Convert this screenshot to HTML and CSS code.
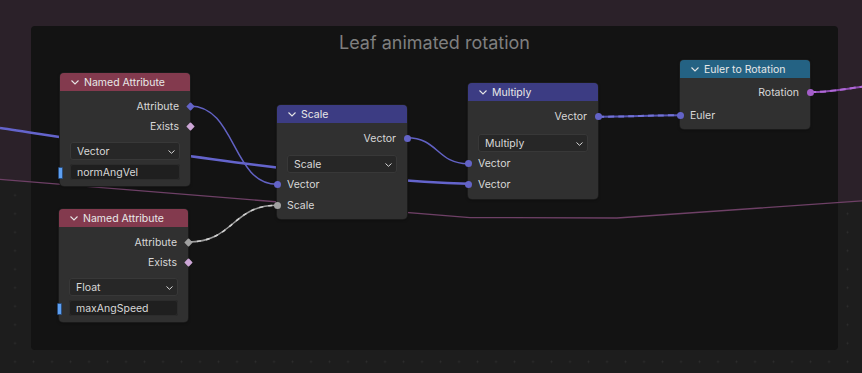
FILE: index.html
```html
<!DOCTYPE html>
<html lang="en">
<head>
  <meta charset="UTF-8">
  <meta name="viewport" content="width=device-width, initial-scale=1.0">
  <title>Leaf animated rotation</title>
  <link rel="stylesheet" href="styles.css">
</head>
<body>
  <div class="editor">
    <!-- purple area of the parent frame behind everything -->
    <svg class="backdrop" width="862" height="373" viewBox="0 0 862 373">
      <polygon points="0,0 862,0 862,201 617,218 475,218 0,179.3" fill="#2b2129"/>
    </svg>

    <div class="frame">
      <div class="frame-title">Leaf animated rotation</div>
    </div>

    <svg class="links" width="862" height="373" viewBox="0 0 862 373">
      <!-- thin link passing under everything -->
      <polyline points="-2,179.2 470,217.6 617,218 864,200.8" fill="none" stroke="#6e4066" stroke-width="1.3"/>
      <!-- long vector link into Multiply second input -->
      <path d="M0,128 C120,146 330,180 468,183.7" fill="none" stroke="#6464cc" stroke-width="2.6"/>
      <!-- attribute -> scale vector -->
      <path d="M190,106 C236,106 232,184.3 277,184.3" fill="none" stroke="#6262c4" stroke-width="1.5"/>
      <!-- float attribute -> scale -->
      <path d="M188,242 C234,242 232,205.3 277,205.3" fill="none" stroke="#9c9c9c" stroke-width="1.5"/>
      <path d="M188,242 C234,242 232,205.3 277,205.3" fill="none" stroke="#d0d0d0" stroke-width="1.5" stroke-dasharray="4 5"/>
      <!-- scale out -> multiply in -->
      <path d="M407,137.7 C438,137.7 437,163.7 468,163.7" fill="none" stroke="#6262c4" stroke-width="1.5"/>
      <!-- multiply -> euler -->
      <path d="M598,116.7 C640,116.7 640,115.3 680,115.3" fill="none" stroke="#5656b4" stroke-width="2"/>
      <path d="M598,116.7 C640,116.7 640,115.3 680,115.3" fill="none" stroke="#7272d8" stroke-width="2" stroke-dasharray="6 4"/>
      <!-- rotation out -->
      <path d="M810,92 C836,92 846,88 870,86" fill="none" stroke="#8a4cac" stroke-width="2"/>
      <path d="M810,92 C836,92 846,88 870,86" fill="none" stroke="#b068d8" stroke-width="2" stroke-dasharray="6 4"/>
    </svg>

    <!-- Named Attribute (vector) -->
    <div class="node n-attr" style="left:60px; top:73px; width:130px;">
      <div class="node-head head-attr">
        <svg class="chev" width="8" height="5" viewBox="0 0 8 5"><path d="M0.5,0.5 L4,4 L7.5,0.5" fill="none" stroke="#e6e6e6" stroke-width="1.1"/></svg>
        Named Attribute
      </div>
      <div class="node-body">
        <div class="row out">Attribute<i class="sock diamond vec"></i></div>
        <div class="row out">Exists<i class="sock diamond bool"></i></div>
        <div class="select">Vector<svg class="drop" width="7" height="4" viewBox="0 0 7 4"><path d="M0.5,0.5 L3.5,3.3 L6.5,0.5" fill="none" stroke="#d8d8d8" stroke-width="1"/></svg></div>
        <div class="field"><span class="marker"></span>normAngVel</div>
      </div>
    </div>

    <!-- Named Attribute (float) -->
    <div class="node n-attr" style="left:59px; top:209px; width:129px;">
      <div class="node-head head-attr">
        <svg class="chev" width="8" height="5" viewBox="0 0 8 5"><path d="M0.5,0.5 L4,4 L7.5,0.5" fill="none" stroke="#e6e6e6" stroke-width="1.1"/></svg>
        Named Attribute
      </div>
      <div class="node-body">
        <div class="row out">Attribute<i class="sock diamond float"></i></div>
        <div class="row out">Exists<i class="sock diamond bool"></i></div>
        <div class="select">Float<svg class="drop" width="7" height="4" viewBox="0 0 7 4"><path d="M0.5,0.5 L3.5,3.3 L6.5,0.5" fill="none" stroke="#d8d8d8" stroke-width="1"/></svg></div>
        <div class="field"><span class="marker"></span>maxAngSpeed</div>
      </div>
    </div>

    <!-- Scale -->
    <div class="node n-scale" style="left:277px; top:105px; width:130px;">
      <div class="node-head head-vec">
        <svg class="chev" width="8" height="5" viewBox="0 0 8 5"><path d="M0.5,0.5 L4,4 L7.5,0.5" fill="none" stroke="#e6e6e6" stroke-width="1.1"/></svg>
        Scale
      </div>
      <div class="node-body">
        <div class="row out">Vector<i class="sock circle vec"></i></div>
        <div class="select">Scale<svg class="drop" width="7" height="4" viewBox="0 0 7 4"><path d="M0.5,0.5 L3.5,3.3 L6.5,0.5" fill="none" stroke="#d8d8d8" stroke-width="1"/></svg></div>
        <div class="row in">Vector<i class="sock circle vec"></i></div>
        <div class="row in">Scale<i class="sock circle float"></i></div>
      </div>
    </div>

    <!-- Multiply -->
    <div class="node n-mult" style="left:468px; top:83px; width:130px;">
      <div class="node-head head-vec">
        <svg class="chev" width="8" height="5" viewBox="0 0 8 5"><path d="M0.5,0.5 L4,4 L7.5,0.5" fill="none" stroke="#e6e6e6" stroke-width="1.1"/></svg>
        Multiply
      </div>
      <div class="node-body">
        <div class="row out">Vector<i class="sock circle vec"></i></div>
        <div class="select">Multiply<svg class="drop" width="7" height="4" viewBox="0 0 7 4"><path d="M0.5,0.5 L3.5,3.3 L6.5,0.5" fill="none" stroke="#d8d8d8" stroke-width="1"/></svg></div>
        <div class="row in">Vector<i class="sock circle vec"></i></div>
        <div class="row in">Vector<i class="sock circle vec"></i></div>
      </div>
    </div>

    <!-- Euler to Rotation -->
    <div class="node n-euler" style="left:680px; top:60px; width:130px;">
      <div class="node-head head-conv">
        <svg class="chev" width="8" height="5" viewBox="0 0 8 5"><path d="M0.5,0.5 L4,4 L7.5,0.5" fill="none" stroke="#e6e6e6" stroke-width="1.1"/></svg>
        Euler to Rotation
      </div>
      <div class="node-body">
        <div class="row out">Rotation<i class="sock circle rot"></i></div>
        <div class="row in">Euler<i class="sock circle vec"></i></div>
      </div>
    </div>
  </div>
</body>
</html>
```

FILE: styles.css
```css
html, body {
  margin: 0;
  padding: 0;
  background: #1d1d1d;
}
body {
  font-family: Inter, "Noto Sans", "DejaVu Sans", sans-serif;
  font-size: 10.5px;
  color: #d8d8d8;
}
.editor {
  position: relative;
  width: 862px;
  height: 373px;
  overflow: hidden;
  background-color: #1d1d1d;
  background-image: radial-gradient(circle, #2e2e2e 0.8px, transparent 1.1px);
  background-size: 18.5px 18.5px;
  background-position: 5.75px 1px;
}
.backdrop, .links {
  position: absolute;
  left: 0;
  top: 0;
}
.frame {
  position: absolute;
  left: 31px;
  top: 26px;
  width: 807px;
  height: 324px;
  background: #131313;
  border-radius: 4px;
}
.frame-title {
  padding-top: 6px;
  text-align: center;
  font-size: 18px;
  line-height: 22px;
  color: #7f7f7f;
}

/* nodes */
.node {
  position: absolute;
  background: #303030;
  border-radius: 4px;
  box-shadow: 0 0 0 1px #1a1a1a, 0 1px 3px rgba(0, 0, 0, 0.45);
}
.node-head {
  height: 18px;
  box-sizing: border-box;
  padding-top: 1px;
  display: flex;
  align-items: center;
  gap: 5px;
  padding-left: 11px;
  border-radius: 4px 4px 0 0;
  color: #e8e8e8;
  line-height: 17px;
}
.head-attr { background: #833a4e; }
.head-vec { background: #3c3c83; }
.head-conv { background: #246283; }
.chev { flex: none; }

.node-body {
  display: flex;
  flex-direction: column;
  padding: 5px 0 5px;
}
.row {
  position: relative;
  height: 20px;
  line-height: 21px;
}
.row.out {
  text-align: right;
  padding-right: 11px;
}
.row.in {
  padding-left: 10px;
  margin-top: 1px;
}
.sock {
  position: absolute;
  top: 6.5px;
  width: 7px;
  height: 7px;
}
.row.out .sock { right: -3.5px; }
.row.in .sock { left: -3.5px; }
.circle {
  border-radius: 50%;
}
.diamond {
  transform: rotate(45deg) scale(0.88);
  border-radius: 1px;
}
.vec { background: #6363c7; }
.bool { background: #cca6d6; }
.float { background: #a1a1a1; }
.rot { background: #a45ec9; }

.select, .field {
  position: relative;
  margin: 0 10px;
  border-radius: 3px;
  padding-left: 7px;
  box-sizing: border-box;
}
.select {
  height: 18px;
  line-height: 19px;
  margin-top: 8px;
  background: #272727;
  box-shadow: inset 0 0 0 1px #383838;
}
.drop {
  position: absolute;
  right: 5px;
  top: 8px;
}
.field {
  height: 16px;
  line-height: 17px;
  margin-top: 4px;
  background: #1f1f1f;
  box-shadow: inset 0 0 0 1px #2c2c2c;
}
.marker {
  position: absolute;
  left: -12px;
  top: 2.5px;
  width: 3px;
  height: 10px;
  background: #5ea0f2;
  border: 0.5px solid #2a4f80;
  border-radius: 1px;
}

/* per node spacing */
.n-attr .select { margin-top: 6px; }
.n-attr .node-body { padding-bottom: 6px; }
.n-scale .select { margin-top: 7px; }
.n-scale .node-body { padding-bottom: 4px; }
.n-euler .node-body { padding: 4px 0 4px; }
.n-euler .row.in { margin-top: 3px; }
```
